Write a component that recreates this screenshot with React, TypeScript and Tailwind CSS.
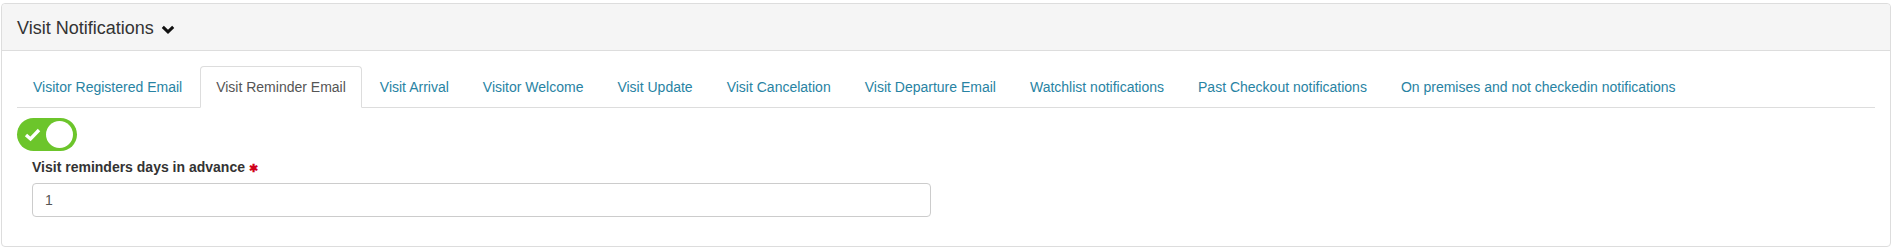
import React from "react";

const tabs = [
  "Visitor Registered Email",
  "Visit Reminder Email",
  "Visit Arrival",
  "Visitor Welcome",
  "Visit Update",
  "Visit Cancelation",
  "Visit Departure Email",
  "Watchlist notifications",
  "Past Checkout notifications",
  "On premises and not checkedin notifications",
];

export default function App() {
  const active = 1;
  return (
    <div
      className="pl-[1px] pt-[3px] w-[1899px] h-[247px] bg-white text-[14px] leading-[20px] text-[#333]"
      style={{ fontFamily: '"Liberation Sans", Arial, sans-serif' }}
    >
      <div className="w-[1890px] border border-[#ddd] rounded-[4px] bg-white">
        <div className="h-[47px] bg-[#f5f5f5] border-b border-[#ddd] rounded-t-[4px] px-[15px] flex items-center">
          <span className="text-[18px] leading-[20px] text-[#333] mt-[1px]">Visit Notifications</span>
          <svg width="14" height="9" viewBox="0 0 14 9" className="ml-[7px] mt-[4px]">
            <polyline points="1.8,1.8 7,6.8 12.2,1.8" fill="none" stroke="#111" strokeWidth="3" strokeLinecap="butt" strokeLinejoin="miter" />
          </svg>
        </div>
        <div className="px-[15px] pt-[15px] pb-[29px]">
          <ul className="flex border-b border-[#ddd] w-[1858px]">
            {tabs.map((t, i) => (
              <li key={t} className="mb-[-1px] mr-[2px]">
                {i === active ? (
                  <span className="block px-[15px] py-[10px] border border-[#ddd] border-b-transparent rounded-t-[4px] bg-white text-[#555]">
                    {t}
                  </span>
                ) : (
                  <span className="block px-[15px] py-[10px] border border-transparent rounded-t-[4px] text-[#2883a3]">
                    {t}
                  </span>
                )}
              </li>
            ))}
          </ul>
          <div className="pt-[10px]">
            <div className="relative w-[60px] h-[33px] rounded-full bg-[#6cc52b]">
              <svg width="17" height="14" viewBox="0 0 17 14" className="absolute left-[7px] top-[10px]">
                <polyline points="2,7 6.5,11 15,2" fill="none" stroke="#fff" strokeWidth="3.4" />
              </svg>
              <div className="absolute right-[4px] top-[3px] w-[27px] h-[27px] rounded-full bg-white" />
            </div>
            <div className="pl-[15px] pt-[6px]">
              <label className="block font-bold mb-[5px] text-[#333]">
                Visit reminders days in advance
                <span className="text-[#d0021b] text-[11px] ml-[4px] align-middle">✱</span>
              </label>
              <div className="w-[899px] h-[34px] border border-[#ccc] rounded-[4px] px-[12px] py-[6px] text-[#555] flex items-center">
                1
              </div>
            </div>
          </div>
        </div>
      </div>
    </div>
  );
}
